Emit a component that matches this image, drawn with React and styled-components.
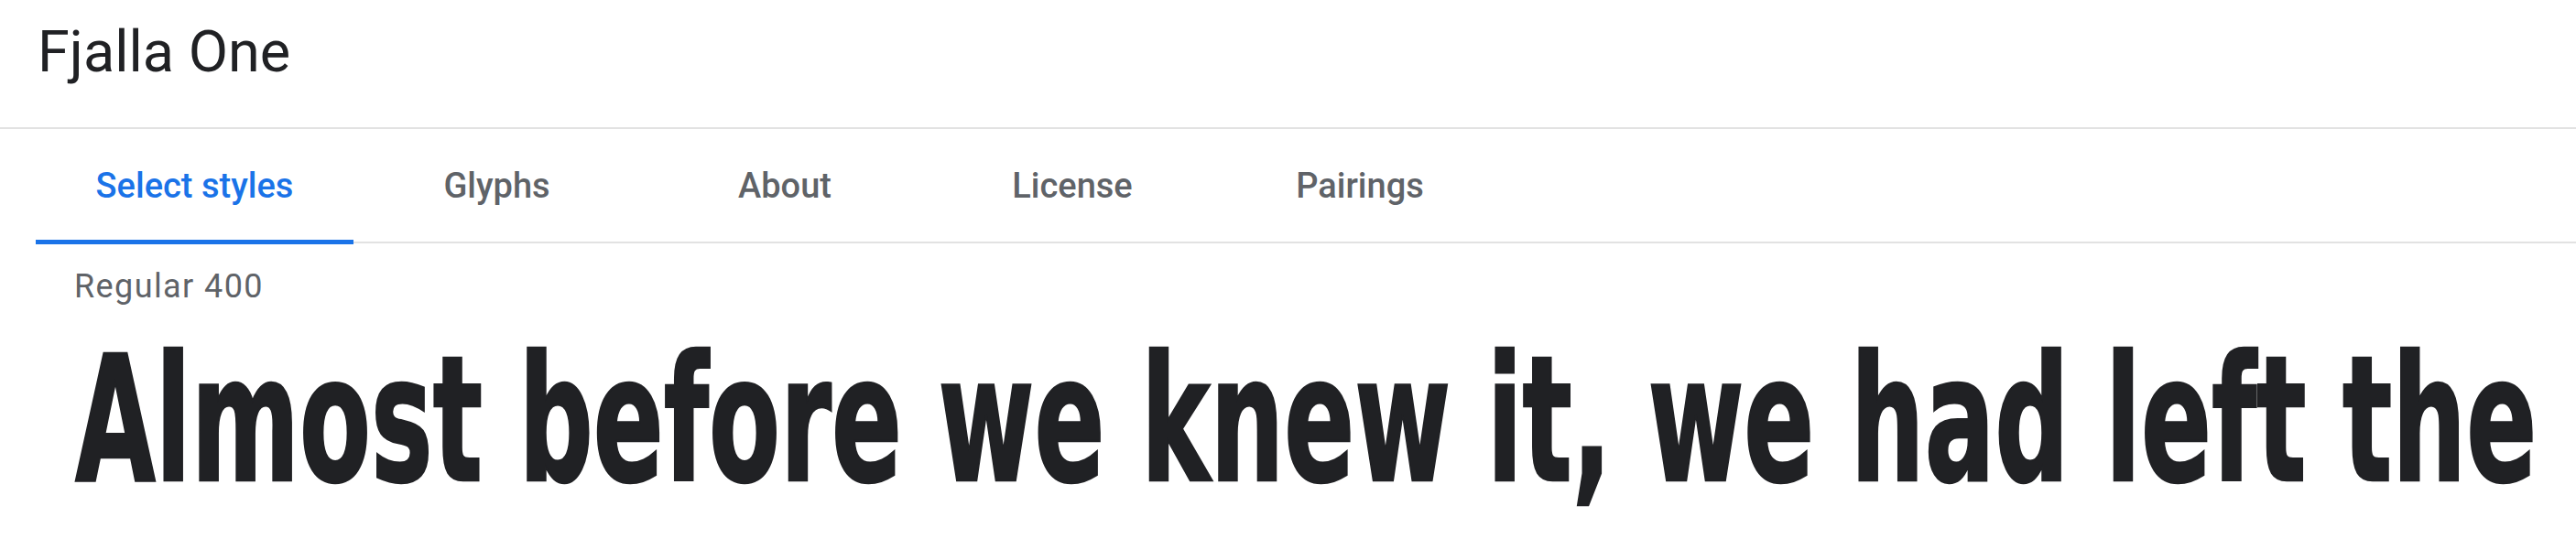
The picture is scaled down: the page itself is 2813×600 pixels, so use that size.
import React, { useLayoutEffect, useRef, useState } from 'react';
import styled, { createGlobalStyle } from 'styled-components';

const GlobalStyle = createGlobalStyle`
  body {
    margin: 0;
    background: #fff;
    font-family: Roboto, "Open Sans", Arial, sans-serif;
  }
`;

const Page = styled.div`
  width: 100%;
  min-height: 600px;
`;

const Header = styled.header`
  box-sizing: border-box;
  height: 141px;
  padding: 25px 0 0 41px;
  border-bottom: 2px solid #e2e2e2;
`;

const FamilyName = styled.h1`
  margin: 0;
  font-size: 63px;
  font-weight: 400;
  line-height: 1;
  color: #202124;
`;

const TabBar = styled.nav`
  display: flex;
  margin-left: 39px;
  border-bottom: 2px solid #e2e2e2;
`;

const Tab = styled.div`
  box-sizing: border-box;
  width: ${(p) => p.$w}px;
  height: 126px;
  margin-bottom: -3px;
  padding-top: 43px;
  text-align: center;
  font-size: 38px;
  font-weight: 500;
  line-height: 1;
  color: ${(p) => (p.$active ? '#1a73e8' : '#5f6368')};
  border-bottom: 5px solid ${(p) => (p.$active ? '#1a73e8' : 'transparent')};
`;

const StyleLabel = styled.div`
  margin-top: 29px;
  padding-left: 81px;
  font-size: 36px;
  line-height: 1;
  letter-spacing: 1.4px;
  color: #5f6368;
`;

const Specimen = styled.div`
  height: 235px;
  margin-top: 34px;
  padding-left: 82px;
  white-space: nowrap;
`;

// condensed stand-in for Fjalla One, fitted to the line at runtime
const SpecimenText = styled.span`
  display: inline-block;
  font-family: "DejaVu Sans Condensed", "DejaVu Sans", sans-serif;
  font-stretch: condensed;
  font-weight: 700;
  line-height: 1;
  color: #202124;
  -webkit-text-stroke: 1.6px #202124;
  transform-origin: left top;
`;

const tabs = [
  { label: 'Select styles', w: 347, active: true },
  { label: 'Glyphs', w: 313 },
  { label: 'About', w: 316 },
  { label: 'License', w: 312 },
  { label: 'Pairings', w: 316 },
];

const LINE_WIDTH = 2688;
const CAP_HEIGHT = 139;

export default function App() {
  const textRef = useRef(null);
  const [fit, setFit] = useState({ size: 100, sy: 1 });

  useLayoutEffect(() => {
    const measure = () => {
      const el = textRef.current;
      if (!el) return;
      const current = parseFloat(getComputedStyle(el).fontSize);
      const size = (current * LINE_WIDTH) / el.offsetWidth;
      setFit({ size, sy: CAP_HEIGHT / (0.729 * size) });
    };
    measure();
    if (document.fonts) document.fonts.ready.then(measure);
  }, []);

  return (
    <Page>
      <GlobalStyle />
      <Header>
        <FamilyName>Fjalla One</FamilyName>
      </Header>
      <TabBar>
        {tabs.map((t) => (
          <Tab key={t.label} $w={t.w} $active={t.active}>
            {t.label}
          </Tab>
        ))}
      </TabBar>
      <StyleLabel>Regular 400</StyleLabel>
      <Specimen>
        <SpecimenText
          ref={textRef}
          style={{ fontSize: `${fit.size}px`, transform: `scaleY(${fit.sy})` }}
        >
          Almost before we knew it, we had left the
        </SpecimenText>
      </Specimen>
    </Page>
  );
}
